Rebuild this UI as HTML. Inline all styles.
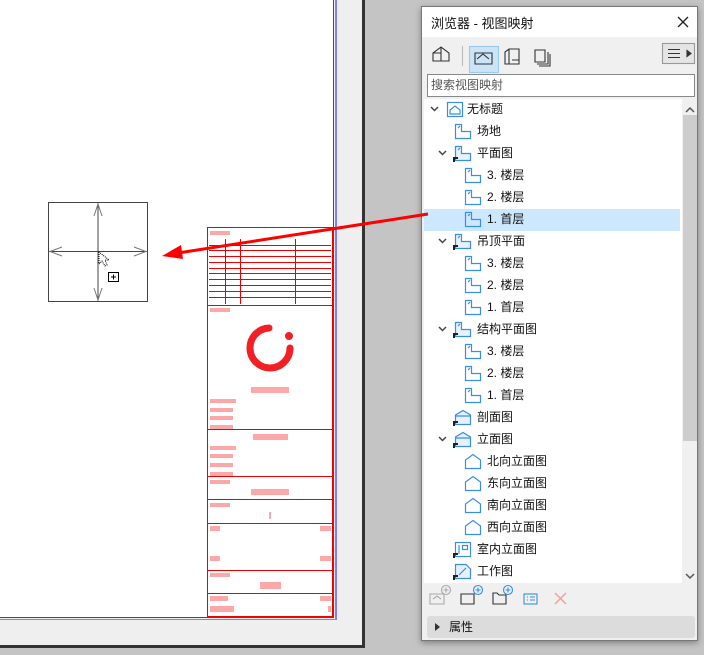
<!DOCTYPE html>
<html><head><meta charset="utf-8"><style>
*{margin:0;padding:0;box-sizing:border-box}
body{width:704px;height:655px;overflow:hidden;background:#c4c4c4;font-family:"Liberation Sans","Noto Sans CJK SC",sans-serif;position:relative}
.abs{position:absolute}
.row{position:absolute;height:22px;font-size:12px;line-height:22px;color:#111;white-space:nowrap}
</style></head><body>
<div class="abs" style="left:0;top:0;width:362px;height:646px;background:#efefef"></div>
<div class="abs" style="left:0;top:0;width:333px;height:617px;background:#fff"></div>
<div class="abs" style="left:333px;top:0;width:1px;height:618px;background:#f00"></div>
<div class="abs" style="left:335px;top:0;width:2px;height:620px;background:#8080ff"></div>
<div class="abs" style="left:0;top:617px;width:334px;height:1px;background:#f00"></div>
<div class="abs" style="left:0;top:619px;width:337px;height:1px;background:#8080ff"></div>
<div class="abs" style="left:362px;top:0;width:3px;height:648px;background:#333"></div>
<div class="abs" style="left:0;top:645px;width:365px;height:3px;background:#333"></div>

<svg class="abs" style="left:0;top:0" width="420" height="655">
 <g stroke="#444" fill="none" stroke-width="1">
  <rect x="48.5" y="202.5" width="99" height="99"/>
  <line x1="98" y1="203" x2="98" y2="301"/><line x1="49" y1="251.5" x2="147" y2="251.5"/>
 </g>
 <g stroke="#777" fill="none" stroke-width="1">
  <path d="M94 216 L98 204 L102 216"/><path d="M94 288 L98 300 L102 288"/>
  <path d="M62 247 L50 251.5 L62 256"/><path d="M134 247 L146 251.5 L134 256"/>
 </g>
 <path d="M99 252 L99 264 L102 261 L105 266 L107 265 L105 260 L109 260 Z" fill="#fff" stroke="#000" stroke-dasharray="1 1"/>
 <rect x="108.5" y="272.5" width="10" height="9" fill="#fff" stroke="#000"/>
 <path d="M113.5 274.5v5M111 277h5" stroke="#000"/>
 <g stroke="#e00" fill="none" stroke-width="1">
  <rect x="207.5" y="227.5" width="125" height="389"/>
  <line x1="209" y1="245.5" x2="331" y2="245.5"/><line x1="209" y1="250.5" x2="331" y2="250.5"/>
  <line x1="209" y1="256.5" x2="331" y2="256.5"/><line x1="209" y1="262.5" x2="331" y2="262.5"/>
  <line x1="209" y1="268.5" x2="331" y2="268.5"/><line x1="209" y1="273.5" x2="331" y2="273.5"/>
  <line x1="209" y1="279.5" x2="331" y2="279.5"/><line x1="209" y1="285.5" x2="331" y2="285.5"/>
  <line x1="209" y1="291.5" x2="331" y2="291.5"/><line x1="209" y1="297.5" x2="331" y2="297.5"/>
  <line x1="225.5" y1="239" x2="225.5" y2="304"/><line x1="240.5" y1="239" x2="240.5" y2="304"/><line x1="295.5" y1="239" x2="295.5" y2="304"/>
  <line x1="207" y1="305.5" x2="333" y2="305.5"/><line x1="207" y1="429.5" x2="333" y2="429.5"/>
  <line x1="207" y1="476.5" x2="333" y2="476.5"/><line x1="207" y1="499.5" x2="333" y2="499.5"/>
  <line x1="207" y1="523.5" x2="333" y2="523.5"/><line x1="207" y1="570.5" x2="333" y2="570.5"/>
  <line x1="207" y1="593.5" x2="333" y2="593.5"/>
 </g>
 <path d="M269 328 A20 20 0 1 0 290 348" stroke="#f21f24" stroke-width="7" fill="none" stroke-linecap="round"/>
 <circle cx="289" cy="336" r="4" fill="#f21f24"/>
 <g fill="#fca8a8">
  <rect x="210" y="231" width="20" height="4"/><rect x="210" y="308" width="20" height="4"/>
  <rect x="251" y="387" width="38" height="6"/><rect x="210" y="399" width="26" height="4"/>
  <rect x="210" y="408" width="23" height="4"/><rect x="210" y="416" width="23" height="4"/><rect x="210" y="425" width="23" height="4"/>
  <rect x="253" y="434" width="35" height="6"/><rect x="210" y="446" width="26" height="4"/>
  <rect x="210" y="454" width="23" height="4"/><rect x="210" y="463" width="23" height="4"/><rect x="210" y="472" width="23" height="4"/>
  <rect x="210" y="480" width="20" height="4"/><rect x="251" y="489" width="38" height="6"/>
  <rect x="210" y="503" width="20" height="4"/><rect x="269" y="512" width="2" height="7"/>
  <rect x="210" y="526" width="10" height="5"/><rect x="320" y="526" width="11" height="5"/>
  <rect x="210" y="556" width="10" height="5"/><rect x="320" y="556" width="11" height="5"/>
  <rect x="210" y="573" width="20" height="4"/><rect x="260" y="582" width="21" height="7"/>
  <rect x="210" y="596" width="18" height="5"/><rect x="320" y="596" width="11" height="5"/>
  <rect x="210" y="606" width="24" height="6"/><rect x="328" y="606" width="3" height="6"/>
 </g>
</svg>

<div class="abs" style="left:421px;top:6px;width:277px;height:635px;background:#f0f0f0;border:1px solid #777;box-shadow:0 2px 6px rgba(0,0,0,.35)">
 <div class="abs" style="left:0;top:0;width:275px;height:30px;background:#fff"></div>
 <div class="abs" style="left:9px;top:6px;font-size:13px;color:#111">浏览器 - 视图映射</div>
 <svg class="abs" style="left:254px;top:8px" width="14" height="14"><path d="M2 2L12 12M12 2L2 12" stroke="#222" stroke-width="1.3"/></svg>
 <svg class="abs" style="left:0;top:31px" width="275" height="36" fill="none" stroke="#333" stroke-width="1.1">
  <path d="M11 23V15L19 9L27 15V23H11ZM11 15H19V23M19 9V15" />
  <line x1="40.5" y1="8" x2="40.5" y2="28" stroke="#bbb"/>
  <rect x="47.5" y="8.5" width="29" height="26" fill="#cce4f7" stroke="#99c9ef"/>
  <path d="M53 26V15H70V26ZM55 21L61 16L67 21" />
  <path d="M83 26V14L87 11H97V26ZM87 11V26M90 22H97" />
  <path d="M113 12H123V24H113ZM115 26H126V14M117 28H128V16" />
  <rect x="240.5" y="5.5" width="32" height="20" fill="#e5e5e5" stroke="#999"/>
  <path d="M246 11.5h12M246 15.5h12M246 19.5h12"/><path d="M265 12.5l4 3-4 3z" fill="#333"/>
 </svg>
 <div class="abs" style="left:5px;top:67px;width:268px;height:23px;background:#fff;border:1px solid #888;font-size:12px;line-height:21px;color:#555;padding-left:3px">搜索视图映射</div>
 <div class="abs" style="left:2px;top:92px;width:258px;height:484px;background:#fff;overflow:hidden"></div>
 <div class="abs" style="left:260px;top:92px;width:15px;height:484px;background:#f0f0f0"></div>
 <div class="abs" style="left:261px;top:108px;width:14px;height:326px;background:#cdcdcd"></div>
 <svg class="abs" style="left:262px;top:96px" width="12" height="480"><path d="M2 9L6 5L10 9" stroke="#555" fill="none" stroke-width="1.5"/><path d="M2 471L6 475L10 471" stroke="#555" fill="none" stroke-width="1.5"/></svg>
 <div class="abs" style="left:2px;top:202px;width:256px;height:22px;background:#cce8ff"></div>
 <svg class="abs" style="left:0;top:573px" width="275" height="30" fill="none" stroke-width="1.1">
  <g stroke="#aaa"><path d="M8 24V14H22V24ZM11 19l4-3 4 3"/><circle cx="24" cy="10" r="4.5"/><path d="M24 7.5v5M21.5 10h5"/></g>
  <g stroke="#333"><path d="M39 24V14H52V24Z"/></g><g stroke="#3a8ee6"><circle cx="56" cy="10" r="4.5"/><path d="M56 7.5v5M53.5 10h5"/></g>
  <g stroke="#333"><path d="M71 24V13H75L77 15H84V24Z"/></g><g stroke="#3a8ee6"><circle cx="86" cy="10" r="4.5"/><path d="M86 7.5v5M83.5 10h5"/>
  <rect x="102" y="14" width="13" height="10"/><path d="M105 17h1M108 17h5M105 20h1M108 20h5"/></g>
  <path d="M133 13L144 24M144 13L133 24" stroke="#f4a08f" stroke-width="1.5"/>
 </svg>
 <div class="abs" style="left:5px;top:609px;width:268px;height:22px;background:#dcdcdc;border-radius:3px"></div>
 <svg class="abs" style="left:12px;top:615px" width="8" height="10"><path d="M1 1L6 5L1 9Z" fill="#333"/></svg>
 <div class="abs" style="left:27px;top:611px;font-size:12px;line-height:18px;color:#111">属性</div>
</div>

<div id="tree"></div>
<svg class="abs" style="left:0;top:0" width="704" height="655" id="icons"></svg>
<script>
var rows=[[0,'无标题','root',1],[1,'场地','plan',0],[1,'平面图','planf',1],[2,'3. 楼层','plan',0],[2,'2. 楼层','plan',0],[2,'1. 首层','plan',0],
[1,'吊顶平面','planf',1],[2,'3. 楼层','plan',0],[2,'2. 楼层','plan',0],[2,'1. 首层','plan',0],
[1,'结构平面图','planf',1],[2,'3. 楼层','plan',0],[2,'2. 楼层','plan',0],[2,'1. 首层','plan',0],
[1,'剖面图','sect',0],[1,'立面图','sect',1],[2,'北向立面图','elev',0],[2,'东向立面图','elev',0],[2,'南向立面图','elev',0],[2,'西向立面图','elev',0],
[1,'室内立面图','int',0],[1,'工作图','work',0]];
var h='',s='';
rows.forEach(function(r,i){
 var cy=109+i*22, ix=[447,455,465][r[0]], tx=[467,477,487][r[0]];
 h+='<div class="row" style="left:'+tx+'px;top:'+(cy-11)+'px">'+r[1]+'</div>';
 if(r[3]){var cx=ix-13;s+='<path d="M'+(cx-3)+' '+(cy-2)+'l3.5 3.5l3.5-3.5" stroke="#444" stroke-width="1.5" fill="none"/>';}
 var b='stroke="#3a8ee6" stroke-width="1.2" fill="none"',y0=cy-7,x0=ix;
 if(r[2]=='root'){s+='<rect x="'+(x0+.5)+'" y="'+(y0+.5)+'" width="15" height="14" '+b+'/><path d="M'+(x0+3)+' '+(y0+12)+'V'+(y0+8)+'l5-4 5 4V'+(y0+12)+'Z" '+b+'/>';}
 else if(r[2]=='plan'||r[2]=='planf'){s+='<path d="M'+(x0+.5)+' '+(y0+14.5)+'V'+(y0+.5)+'H'+(x0+6.5)+'V'+(y0+7.5)+'H'+(x0+15.5)+'V'+(y0+14.5)+'Z M'+(x0+3)+' '+(y0+4)+'l2-2" '+b+(r[2]=='planf'?' style="fill:#e6f1fc"':'')+'/>';}
 else if(r[2]=='sect'){s+='<path d="M'+(x0+.5)+' '+(y0+14.5)+'V'+(y0+5)+'L'+(x0+8)+' '+(y0+.5)+'L'+(x0+15.5)+' '+(y0+5)+'V'+(y0+14.5)+'Z M'+x0+' '+(y0+6)+'H'+(x0+16)+'" '+b+' style="fill:#e6f1fc"/>';}
 else if(r[2]=='elev'){s+='<path d="M'+(x0+.5)+' '+(y0+14.5)+'V'+(y0+6)+'L'+(x0+8)+' '+(y0+.5)+'L'+(x0+15.5)+' '+(y0+6)+'V'+(y0+14.5)+'Z" '+b+'/>';}
 else if(r[2]=='int'){s+='<rect x="'+(x0+.5)+'" y="'+(y0+.5)+'" width="15" height="14" '+b+'/><rect x="'+(x0+7.5)+'" y="'+(y0+3.5)+'" width="5" height="4" '+b+'/><path d="M'+(x0+4)+' '+(y0+3)+'V'+(y0+12)+'" '+b+'/>';}
 else if(r[2]=='work'){s+='<path d="M'+(x0+.5)+' '+(y0+14.5)+'V'+(y0+.5)+'H'+(x0+11)+'L'+(x0+15.5)+' '+(y0+5)+'V'+(y0+14.5)+'Z M'+(x0+4)+' '+(y0+11)+'L'+(x0+11)+' '+(y0+4)+'" '+b+' style="fill:#e6f1fc"/>';}
 if(r[2]=='planf'||r[2]=='sect'||r[2]=='int'||r[2]=='work'){s+='<path d="M'+(x0-1)+' '+(y0+16)+'V'+(y0+12)+'H'+(x0+3)+'" stroke="#222" stroke-width="2" fill="none"/>';}
});
document.getElementById('tree').innerHTML=h;
s+='<line x1="428" y1="214" x2="178" y2="253" stroke="#f00" stroke-width="3"/><path d="M162 256L181 245L183 259Z" fill="#f00"/>';
document.getElementById('icons').innerHTML=s;
</script>
</body></html>
